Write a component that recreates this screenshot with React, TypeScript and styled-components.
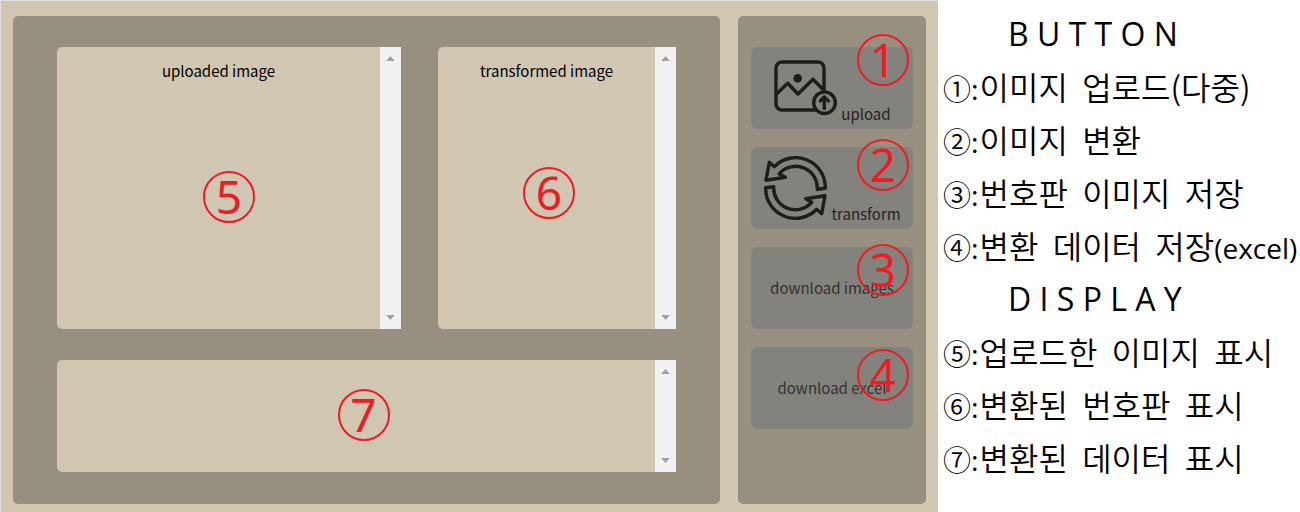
import React from "react";
import styled, { createGlobalStyle } from "styled-components";

const sand = "#d1c6b2";
const stone = "#979080";
const red = "#ed1c24";

const GlobalStyle = createGlobalStyle`
  * { box-sizing: border-box; }
  body {
    margin: 0;
    background: #fff;
    color: #000;
    font-family: "Noto Sans CJK KR", sans-serif;
    font-size: 15px;
    line-height: 24px;
  }
`;

const Page = styled.div`
  display: flex;
  min-height: 100vh;
`;

const Workspace = styled.main`
  flex: 1;
  display: flex;
  gap: 18px;
  padding: 15px 12px 8px;
  background: ${sand};
  border-top: 1px solid #e1e1e1;
  border-left: 1px solid #e1e1e1;
`;

const Viewer = styled.section`
  flex: 1;
  display: flex;
  flex-direction: column;
  gap: 31px;
  padding: 31px 44px 32px;
  border-radius: 5px;
  background: ${stone};
`;

const ImageRow = styled.div`
  flex: 1;
  display: grid;
  grid-template-columns: 344fr 238fr;
  gap: 37px;
`;

const Pane = styled.section`
  position: relative;
  display: flex;
  min-height: 112px;
  border-radius: 5px 0 0 5px;
  background: ${sand};
`;

const PaneTitle = styled.h2`
  flex: 1;
  margin: 0;
  padding-top: 12px;
  font-size: 15px;
  font-weight: 400;
  text-align: center;
`;

const ScrollTrack = styled.div`
  display: flex;
  flex-direction: column;
  justify-content: space-between;
  align-items: center;
  width: 21px;
  margin-left: auto;
  padding: 9px 0;
  background: #f1f1f1;
`;

const ScrollArrow = styled.span<{ $down?: boolean }>`
  width: 9px;
  height: 5px;
  background: #a3a3a3;
  clip-path: ${(p) =>
    p.$down
      ? "polygon(0 0, 100% 0, 50% 100%)"
      : "polygon(0 100%, 100% 100%, 50% 0)"};
`;

const Badge = styled.span<{ $left?: string; $right?: string; $top: string }>`
  position: absolute;
  left: ${(p) => p.$left ?? "auto"};
  right: ${(p) => p.$right ?? "auto"};
  top: ${(p) => p.$top};
  width: 52px;
  height: 52px;
  border: 2px solid ${red};
  border-radius: 50%;
  color: ${red};
  font-family: "Noto Sans", sans-serif;
  font-size: 46px;
  line-height: 46px;
  text-align: center;
`;

const Toolbar = styled.aside`
  display: flex;
  flex-direction: column;
  gap: 18px;
  width: 188px;
  padding: 31px 13px;
  border-radius: 5px;
  background: ${stone};
`;

const ToolButton = styled.button<{ $withIcon?: boolean }>`
  position: relative;
  display: flex;
  justify-content: center;
  align-items: ${(p) => (p.$withIcon ? "baseline" : "center")};
  gap: 4px;
  height: 82px;
  padding: ${(p) => (p.$withIcon ? "9px 0 0" : "0")};
  border: 0;
  border-radius: 6px;
  background: #84827d;
  color: ${(p) => (p.$withIcon ? "#24231f" : "#33322e")};
  font: inherit;
`;

const Icon = styled.svg`
  width: 64px;
  height: 64px;
  flex: none;
  fill: none;
  stroke: #1e1d19;
  stroke-width: 3.4;
  stroke-linecap: round;
  stroke-linejoin: round;
`;

const Legend = styled.aside`
  width: 362px;
  padding: 9px 0 0 5px;
  font-size: 32px;
  font-weight: 350;
  white-space: pre;
`;

const LegendTitle = styled.h2`
  height: 53px;
  margin: 0;
  padding-left: 65px;
  font-family: "Open Sans", sans-serif;
  font-size: 32px;
  font-weight: 400;
  line-height: 50px;
`;

const LegendList = styled.ul`
  margin: 0;
  padding: 0;
  list-style: none;
`;

const LegendItem = styled.li`
  height: 53px;
  line-height: 48px;
`;

const Mark = styled.span`
  margin-right: 1px;
  font-size: 28px;
`;

const Latin = styled.span`
  font-family: "Open Sans", sans-serif;
  font-size: 28px;
  font-weight: 400;
`;

function UploadIcon() {
  return (
    <Icon viewBox="0 0 64 64" aria-hidden="true">
      <rect x="3" y="6" width="48" height="48" rx="6" />
      <circle cx="24.7" cy="22.3" r="4.3" fill="#1e1d19" stroke="none" />
      <path d="M3.5 38 14.7 27.3 25 38 40 23.3 50.5 34" />
      <circle cx="51.5" cy="46.7" r="10.8" fill="#84827d" />
      <path d="M51.3 52.5V41M47.3 44.9l4-4 4 4" />
    </Icon>
  );
}

function TransformIcon() {
  const arrow =
    "M3 24.3 6.3 6.3 11.3 10.7A29.7 29.7 0 0 1 62.3 32.3L54.3 33.3A21.7 21.7 0 0 0 16.3 17.7L22.3 21.3Z";
  return (
    <Icon viewBox="0 0 64 64" aria-hidden="true">
      <path d={arrow} />
      <path d={arrow} transform="rotate(180 32.5 32)" />
    </Icon>
  );
}

function ScrollBar() {
  return (
    <ScrollTrack aria-hidden="true">
      <ScrollArrow />
      <ScrollArrow $down />
    </ScrollTrack>
  );
}

const buttonNotes = [
  ["①", "이미지  업로드(다중)", ""],
  ["②", "이미지  변환", ""],
  ["③", "번호판  이미지  저장", ""],
  ["④", "변환  데이터  저장", "(excel)"],
];

const displayNotes = [
  ["⑤", "업로드한  이미지  표시", ""],
  ["⑥", "변환된  번호판  표시", ""],
  ["⑦", "변환된  데이터  표시", ""],
];

function Notes({ items }: { items: string[][] }) {
  return (
    <LegendList>
      {items.map(([mark, text, latin]) => (
        <LegendItem key={mark}>
          <Mark>{mark}:</Mark>
          {text}
          {latin && <Latin>{latin}</Latin>}
        </LegendItem>
      ))}
    </LegendList>
  );
}

export default function App() {
  return (
    <>
      <GlobalStyle />
      <Page>
        <Workspace>
          <Viewer>
            <ImageRow>
              <Pane>
                <PaneTitle>uploaded image</PaneTitle>
                <ScrollBar />
                <Badge $left="calc(50% - 26px)" $top="124px">5</Badge>
              </Pane>
              <Pane>
                <PaneTitle>transformed image</PaneTitle>
                <ScrollBar />
                <Badge $left="calc(50% - 34px)" $top="120px">6</Badge>
              </Pane>
            </ImageRow>
            <Pane>
              <ScrollBar />
              <Badge $left="calc(50% - 29px)" $top="29px">7</Badge>
            </Pane>
          </Viewer>
          <Toolbar>
            <ToolButton type="button" $withIcon>
              <UploadIcon />
              upload
              <Badge $right="4px" $top="-13px">1</Badge>
            </ToolButton>
            <ToolButton type="button" $withIcon>
              <TransformIcon />
              transform
              <Badge $right="4px" $top="-8px">2</Badge>
            </ToolButton>
            <ToolButton type="button">
              download images
              <Badge $right="4px" $top="-3px">3</Badge>
            </ToolButton>
            <ToolButton type="button">
              download excel
              <Badge $right="4px" $top="2px">4</Badge>
            </ToolButton>
          </Toolbar>
        </Workspace>
        <Legend>
          <LegendTitle>B U T T O N</LegendTitle>
          <Notes items={buttonNotes} />
          <LegendTitle>D I S P L A Y</LegendTitle>
          <Notes items={displayNotes} />
        </Legend>
      </Page>
    </>
  );
}
